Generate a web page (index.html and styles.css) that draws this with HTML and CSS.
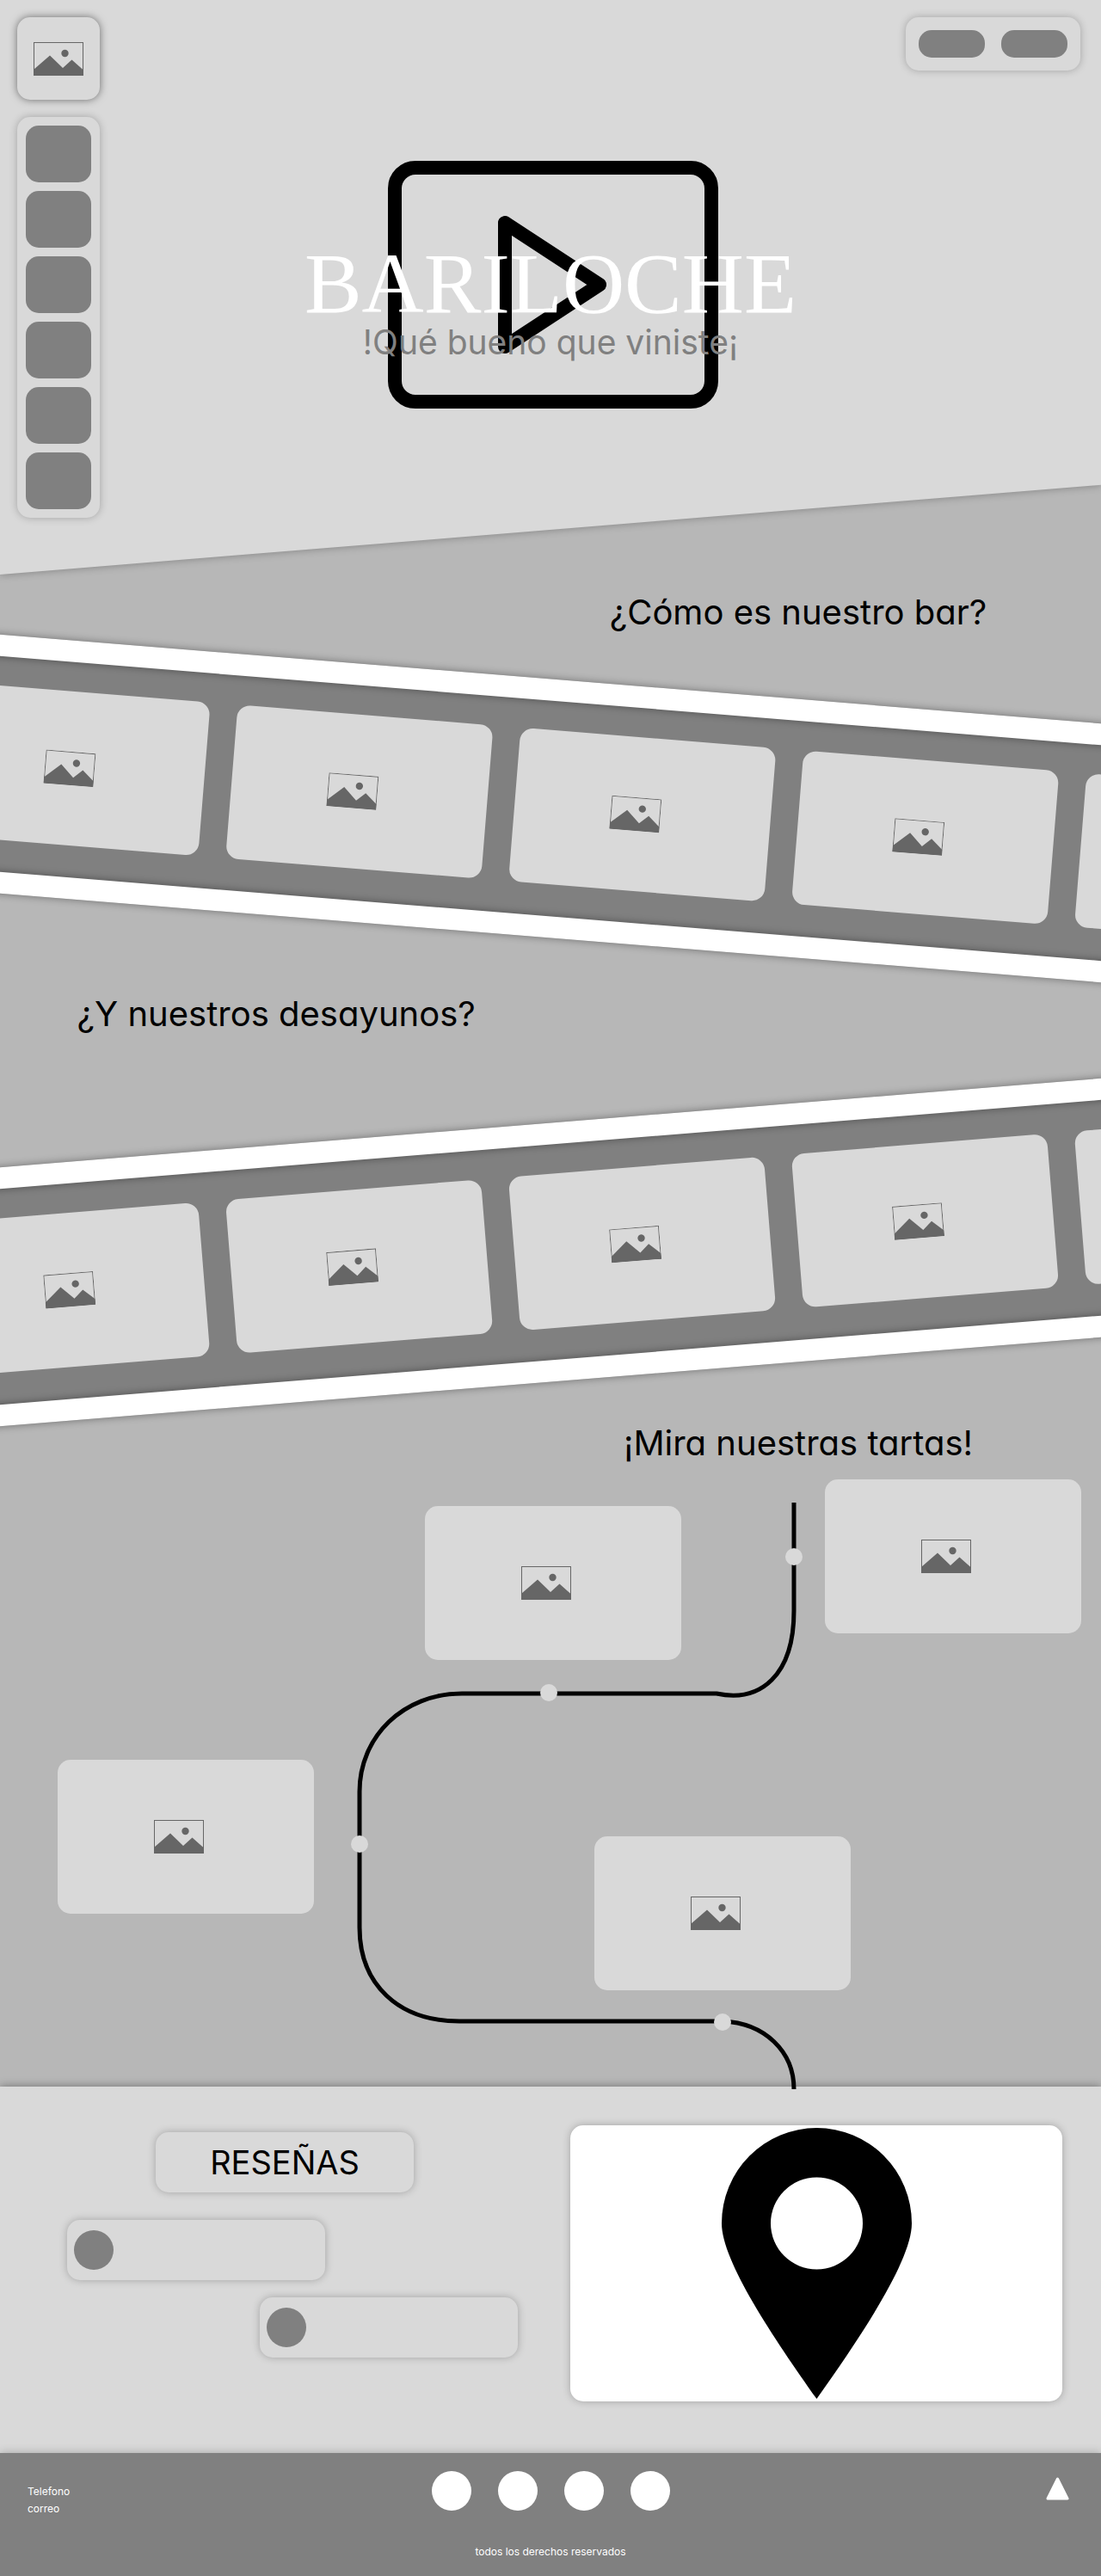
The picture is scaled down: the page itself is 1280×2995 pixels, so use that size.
FILE: index.html
```html
<!DOCTYPE html>
<html lang="es">
<head>
<meta charset="utf-8">
<meta name="viewport" content="width=device-width, initial-scale=1">
<title>Bariloche</title>
<link rel="stylesheet" href="styles.css">
</head>
<body>
<svg class="sprite" aria-hidden="true">
  <symbol id="picture" viewBox="0 0 58 39">
    <rect x="0.5" y="0.5" width="57" height="38" fill="none" stroke="#666" stroke-width="1"/>
    <path d="M0 32 19 15.500 34 30 44.500 20.500 58 32.500V39H0Z" fill="#666"/>
    <circle cx="36.500" cy="13" r="4.200" fill="#666"/>
  </symbol>
</svg>

<header class="hero">
  <div class="hero-backdrop"></div>
  <div class="stage">
    <svg class="play" viewBox="0 0 384 288" aria-hidden="true">
      <rect x="8" y="8" width="368" height="272" rx="24"/>
      <path d="M136 72V216L246 144Z"/>
    </svg>
    <div class="welcome">
      <h1>BARILOCHE</h1>
      <p>!Qué bueno que viniste¡</p>
    </div>
  </div>
  <div class="rail">
    <a class="logo panel" href="#" aria-label="Inicio"><svg class="picture"><use href="#picture"/></svg></a>
    <nav class="menu panel" aria-label="Secciones">
      <a href="#bar" aria-label="Bar"></a>
      <a href="#desayunos" aria-label="Desayunos"></a>
      <a href="#tartas" aria-label="Tartas"></a>
      <a href="#resenas" aria-label="Reseñas"></a>
      <a href="#mapa" aria-label="Mapa"></a>
      <a href="#contacto" aria-label="Contacto"></a>
    </nav>
  </div>
  <div class="account panel">
    <button type="button" aria-label="Ingresar"></button>
    <button type="button" aria-label="Registrarse"></button>
  </div>
</header>

<main class="story">
  <h2 class="heading heading-right" id="bar">¿Cómo es nuestro bar?</h2>
  <div class="film film-down">
    <div class="frames">
      <div class="card"><svg class="picture"><use href="#picture"/></svg></div>
      <div class="card"><svg class="picture"><use href="#picture"/></svg></div>
      <div class="card"><svg class="picture"><use href="#picture"/></svg></div>
      <div class="card"><svg class="picture"><use href="#picture"/></svg></div>
      <div class="card"><svg class="picture"><use href="#picture"/></svg></div>
    </div>
  </div>

  <h2 class="heading heading-left" id="desayunos">¿Y nuestros desayunos?</h2>
  <div class="film film-up">
    <div class="frames">
      <div class="card"><svg class="picture"><use href="#picture"/></svg></div>
      <div class="card"><svg class="picture"><use href="#picture"/></svg></div>
      <div class="card"><svg class="picture"><use href="#picture"/></svg></div>
      <div class="card"><svg class="picture"><use href="#picture"/></svg></div>
      <div class="card"><svg class="picture"><use href="#picture"/></svg></div>
    </div>
  </div>

  <h2 class="heading heading-right" id="tartas">¡Mira nuestras tartas!</h2>
  <div class="route">
    <svg class="track" viewBox="0 0 1280 709" aria-hidden="true">
      <path d="M923 27V153C923 228 884 260 833 249H537C469 249 418 299 418 363V521C418 587 463 630 534 630H840C889 632 923 665 923 709"/>
      <circle cx="923" cy="90" r="10"/>
      <circle cx="638" cy="248" r="10"/>
      <circle cx="418" cy="424" r="10"/>
      <circle cx="840" cy="631" r="10"/>
    </svg>
    <div class="card stop-1"><svg class="picture"><use href="#picture"/></svg></div>
    <div class="card stop-2"><svg class="picture"><use href="#picture"/></svg></div>
    <div class="card stop-3"><svg class="picture"><use href="#picture"/></svg></div>
    <div class="card stop-4"><svg class="picture"><use href="#picture"/></svg></div>
  </div>
</main>

<section class="visit">
  <div class="reviews" id="resenas">
    <h2 class="reviews-title panel">RESEÑAS</h2>
    <div class="review panel"><span class="avatar"></span></div>
    <div class="review review-reply panel"><span class="avatar"></span></div>
  </div>
  <div class="map panel" id="mapa">
    <svg class="pin" viewBox="0 0 221 315" aria-hidden="true">
      <path fill-rule="evenodd" d="M0 111A110.500 111 0 0 1 221 111C221 155 160 245 110.500 315C61 245 0 155 0 111ZM57 111A53.500 53.500 0 0 0 164 111A53.500 53.500 0 0 0 57 111Z"/>
    </svg>
  </div>
</section>

<footer class="footer" id="contacto">
  <div class="contact">
    <span>Telefono</span>
    <span>correo</span>
  </div>
  <div class="social">
    <a href="#" aria-label="Red social 1"></a>
    <a href="#" aria-label="Red social 2"></a>
    <a href="#" aria-label="Red social 3"></a>
    <a href="#" aria-label="Red social 4"></a>
  </div>
  <a class="to-top" href="#" aria-label="Volver arriba">
    <svg viewBox="0 0 27 27"><path d="M13.500 2 25 25H2Z"/></svg>
  </a>
  <p class="rights">todos los derechos reservados</p>
</footer>
</body>
</html>
```
FILE: styles.css
```css
* {
  box-sizing: border-box;
}

body {
  margin: 0;
  background: #b7b7b7;
  color: #000;
  font-family: Inter, "Liberation Sans", sans-serif;
}

h1, h2, p {
  margin: 0;
  font-weight: 400;
}

.sprite {
  display: none;
}

.panel {
  background: #d9d9d9;
  border-radius: 15px;
  box-shadow: 0 0 10px rgba(0, 0, 0, 0.25);
}

.picture {
  display: block;
  flex: none;
  width: 58px;
  height: 39px;
}

.card {
  display: flex;
  align-items: center;
  justify-content: center;
  flex: none;
  width: 298px;
  height: 179px;
  padding-right: 16px;
  border-radius: 15px;
  background: #d9d9d9;
}

/* Hero */
.hero {
  position: relative;
  z-index: 1;
  display: grid;
  align-items: start;
  min-height: 668px;
  padding-top: 20px;
}

.stage,
.rail,
.account {
  grid-area: 1 / 1;
}

.hero-backdrop {
  position: absolute;
  inset: 0;
  overflow-x: clip;
  filter: drop-shadow(0 0 5px rgba(0, 0, 0, 0.3));
}

.hero-backdrop::before {
  content: "";
  display: block;
  height: 100%;
  background: #d9d9d9;
  clip-path: polygon(0 0, 100% 0, 100% 84.4%, 0 100%);
}

.stage {
  position: relative;
  display: grid;
  justify-items: center;
  margin-top: 167px;
}

.play,
.welcome {
  grid-area: 1 / 1;
}

.play {
  width: 384px;
  height: 288px;
  margin-left: 6px;
  fill: none;
  stroke: #000;
  stroke-width: 16;
  stroke-linejoin: round;
}

.welcome {
  padding-top: 95px;
  text-align: center;
}

.welcome h1 {
  font-family: "Liberation Serif", serif;
  font-size: 100px;
  line-height: 96px;
  color: #fff;
}

.welcome p {
  font-size: 39px;
  line-height: 40px;
  color: #808080;
  font-feature-settings: "cv11";
}

.rail {
  position: relative;
  display: flex;
  flex-direction: column;
  justify-self: start;
  gap: 20px;
  width: 96px;
  margin-left: 20px;
}

.logo {
  display: flex;
  align-items: center;
  justify-content: center;
  height: 96px;
  box-shadow: 0 0 10px rgba(0, 0, 0, 0.5);
}

.menu {
  display: flex;
  flex-direction: column;
  gap: 10px;
  padding: 10px;
}

.menu a {
  height: 66px;
  border-radius: 15px;
  background: #808080;
}

.account {
  position: relative;
  display: flex;
  justify-self: end;
  gap: 19px;
  margin-right: 24px;
  padding: 15px;
}

.account button {
  width: 77px;
  height: 32px;
  padding: 0;
  border: 0;
  border-radius: 15px;
  background: #808080;
}

/* Story: film strips and cake route */
.story {
  display: flex;
  flex-direction: column;
  padding-top: 20px;
  overflow-x: clip;
}

.heading {
  font-size: 40px;
  line-height: 48px;
  font-feature-settings: "cv11";
}

.heading-right {
  padding-left: 45%;
  text-align: center;
}

.heading-left {
  padding-left: 7%;
}

.film {
  margin: 54px -62px 65px;
  background: #808080;
}

.film::before,
.film::after {
  content: "";
  display: block;
  height: 25px;
  background: #fff;
  box-shadow: 0 0 10px rgba(0, 0, 0, 0.4);
}

.film-down {
  transform: rotate(4.62deg);
}

.film-up {
  margin-top: 103px;
  margin-bottom: 48px;
  transform: rotate(-4.62deg);
}

.frames {
  display: flex;
  align-items: center;
  gap: 32px;
  height: 250px;
  padding-bottom: 4px;
}

.route {
  position: relative;
  z-index: 2;
  align-self: center;
  width: 1280px;
  height: 706px;
  margin-top: 18px;
}

.track {
  display: block;
  width: 1280px;
  height: 709px;
}

.track path {
  fill: none;
  stroke: #000;
  stroke-width: 5;
}

.track circle {
  fill: #d9d9d9;
}

.route .card {
  position: absolute;
}

.stop-1 { left: 959px; top: 0; }
.stop-2 { left: 494px; top: 31px; }
.stop-3 { left: 67px; top: 326px; }
.stop-4 { left: 691px; top: 415px; }

/* Reviews and map */
.visit {
  position: relative;
  display: grid;
  grid-template-columns: 524fr 572fr;
  gap: 61px;
  padding: 45px 45px 60px 78px;
  background: #d9d9d9;
  box-shadow: 0 0 10px rgba(0, 0, 0, 0.4);
}

.reviews {
  display: flex;
  flex-direction: column;
  padding-top: 8px;
}

.reviews-title {
  align-self: center;
  width: 300px;
  margin-right: 18px;
  font-size: 38px;
  line-height: 70px;
  text-align: center;
}

.review {
  display: flex;
  align-items: center;
  width: 300px;
  height: 70px;
  margin-top: 32px;
  padding-left: 8px;
}

.review-reply {
  align-self: flex-end;
  margin-top: 20px;
}

.avatar {
  width: 46px;
  height: 46px;
  border-radius: 50%;
  background: #808080;
}

.map {
  display: flex;
  align-items: center;
  justify-content: center;
  height: 321px;
  background: #fff;
}

.pin {
  width: 221px;
  height: 315px;
}

/* Footer */
.footer {
  position: relative;
  display: grid;
  grid-template-columns: 1fr auto 1fr;
  align-items: start;
  padding: 21px 32px 18px;
  background: #808080;
  color: #fff;
  font-size: 12px;
  line-height: 20px;
  box-shadow: 0 0 10px rgba(0, 0, 0, 0.25);
}

.contact {
  display: flex;
  flex-direction: column;
  padding-top: 14px;
}

.social {
  display: flex;
  gap: 31px;
}

.social a {
  width: 46px;
  height: 46px;
  border-radius: 50%;
  background: #fff;
}

.to-top {
  justify-self: end;
  margin-top: 7px;
  margin-right: 5px;
}

.to-top svg {
  display: block;
  width: 27px;
  height: 27px;
  fill: #fff;
  stroke: #fff;
  stroke-width: 3;
  stroke-linejoin: round;
}

.rights {
  grid-column: 1 / -1;
  margin-top: 30px;
  text-align: center;
}
```
